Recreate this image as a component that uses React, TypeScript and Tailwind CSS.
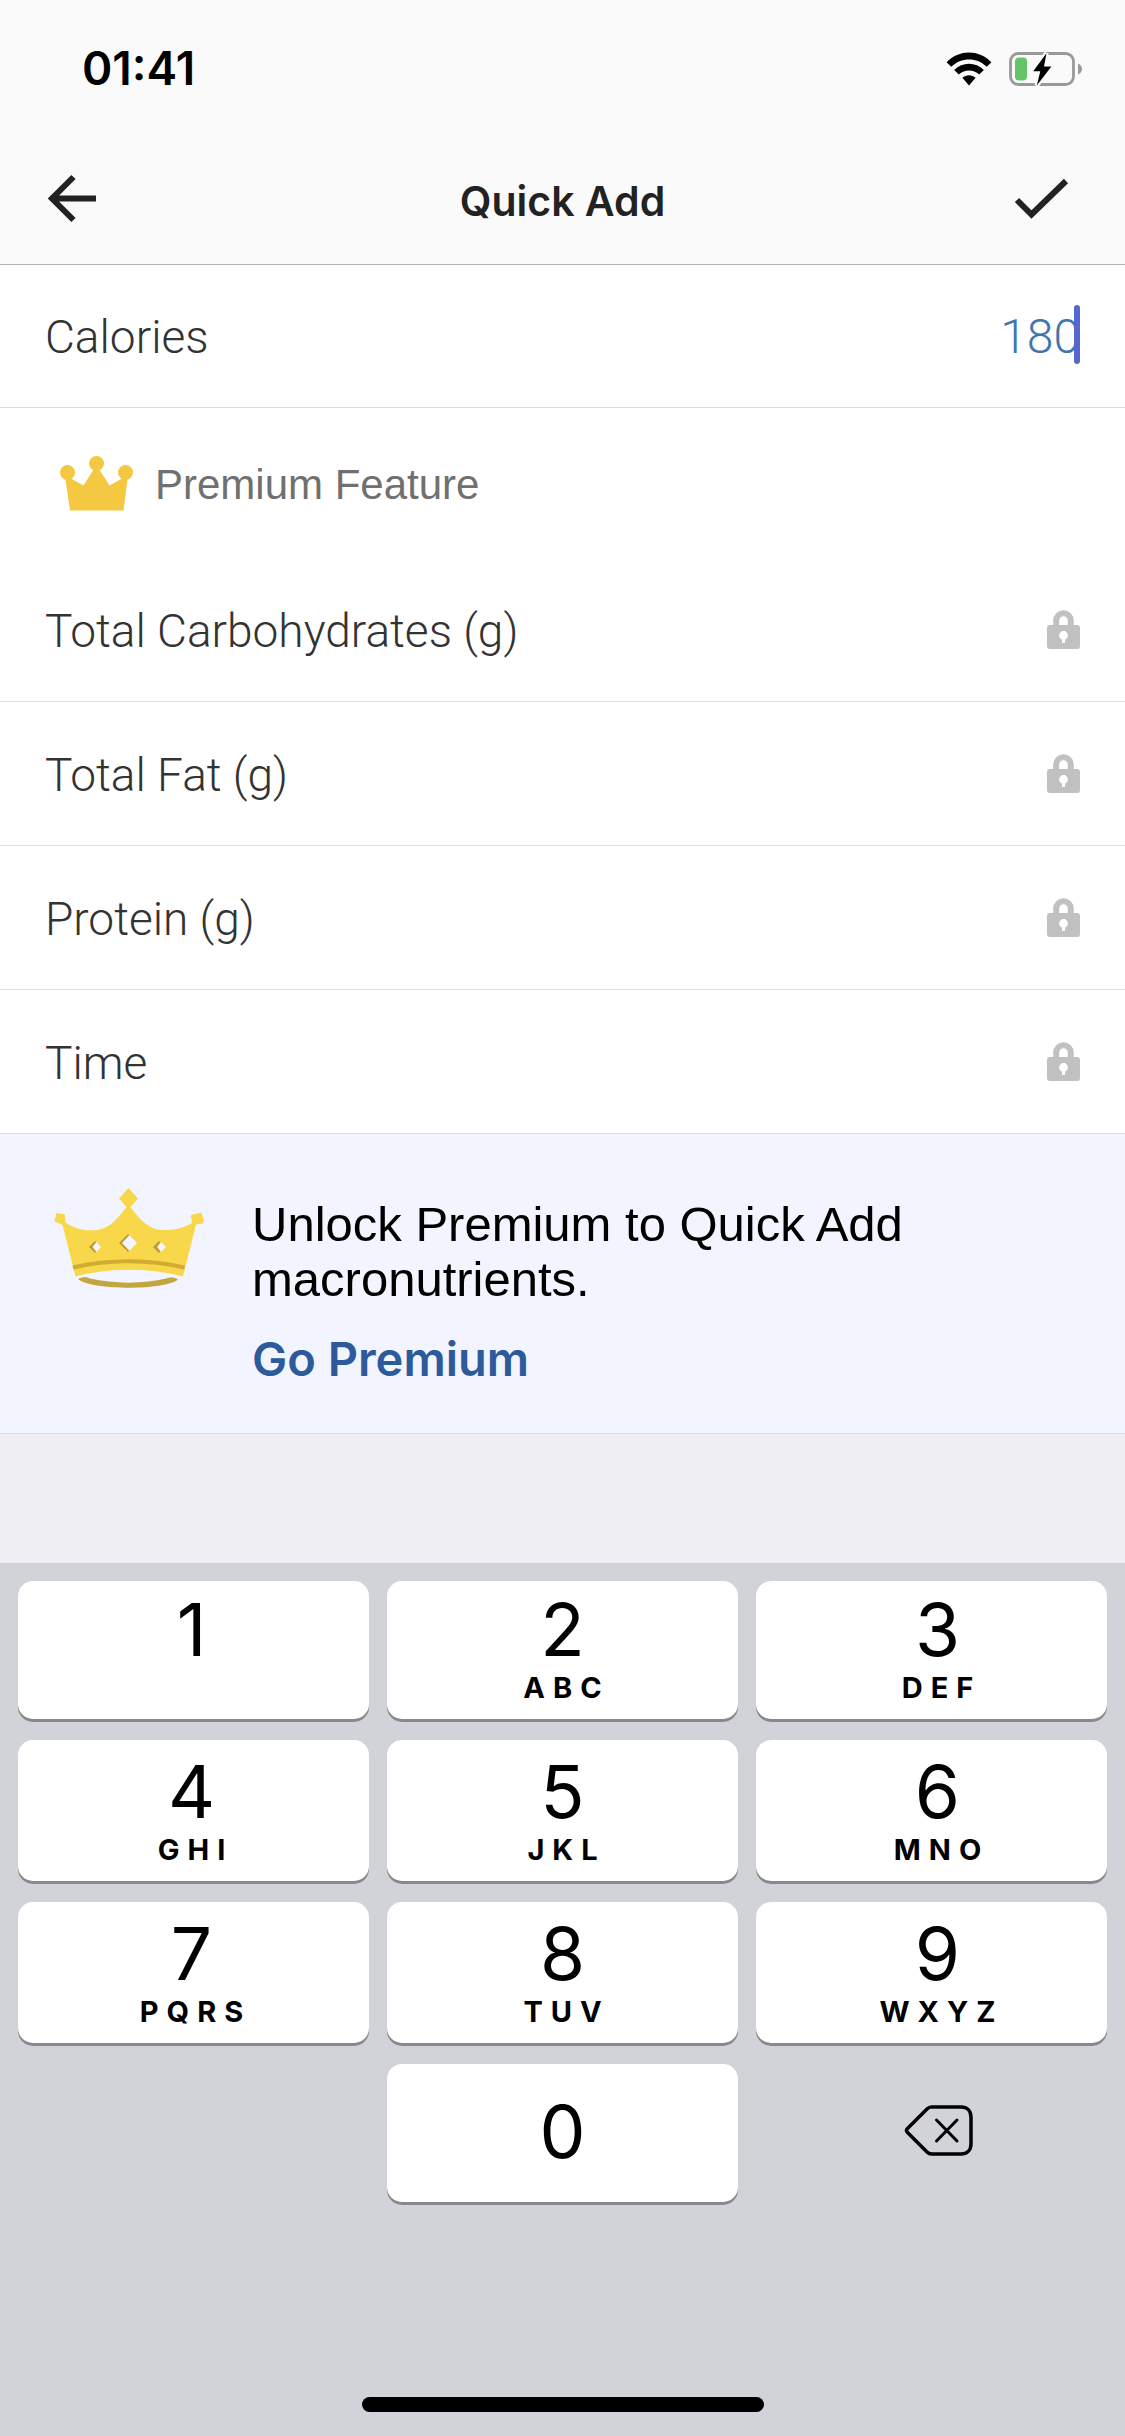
import { useState } from 'react';
import { clsx } from 'clsx';

const KEYS = [
  { digit: '1', letters: '' },
  { digit: '2', letters: 'ABC' },
  { digit: '3', letters: 'DEF' },
  { digit: '4', letters: 'GHI' },
  { digit: '5', letters: 'JKL' },
  { digit: '6', letters: 'MNO' },
  { digit: '7', letters: 'PQRS' },
  { digit: '8', letters: 'TUV' },
  { digit: '9', letters: 'WXYZ' },
];

const LOCKED_FIELDS = ['Total Carbohydrates (g)', 'Total Fat (g)', 'Protein (g)', 'Time'];

function WifiIcon() {
  return (
    <svg viewBox="0 0 46 34" className="h-[34px] w-[46px]" aria-hidden="true">
      <path d="M0.6 10.2C12.8-2.9 33.2-2.9 45.4 10.2L40.8 14.8C31 5 15 5 5.2 14.8Z" />
      <path d="M8.2 18C16.4 9.6 29.6 9.6 37.8 18L33.2 22.6C27.4 17 18.6 17 12.8 22.6Z" />
      <path d="M16.4 25.8C20.2 22.4 25.8 22.4 29.6 25.8L23 33.5Z" />
    </svg>
  );
}

function BatteryIcon() {
  return (
    <svg viewBox="0 0 74 36" className="h-9 w-[74px]" aria-hidden="true">
      <rect x="1.5" y="2.5" width="63" height="31" rx="8" fill="none" stroke="#999" strokeWidth="2.8" />
      <path d="M69 12.5C71.5 13.5 73 15.6 73 18S71.5 22.5 69 23.5Z" fill="#999" />
      <rect x="6" y="6.5" width="12" height="23" rx="4" fill="#65c466" />
      <path d="M37.5 2.2L24.2 20.2H31.3L27.8 34.5L42.4 15.4H35Z" stroke="#fafafa" strokeWidth="4.5" />
      <path d="M37.5 2.2L24.2 20.2H31.3L27.8 34.5L42.4 15.4H35Z" />
    </svg>
  );
}

function LockIcon() {
  return (
    <svg viewBox="0 0 33 40" className="h-10 w-[33px] shrink-0" aria-hidden="true">
      <path d="M9.2 18V10.5a7.3 7.3 0 0 1 14.6 0V18" fill="none" stroke="#c1c1c1" strokeWidth="6" />
      <rect y="15" width="33" height="24" rx="3" fill="#c1c1c1" />
      <circle cx="16.5" cy="25.5" r="4.4" fill="#fff" />
      <path d="M15 27.5h3v5.5h-3z" fill="#fff" />
    </svg>
  );
}

function SmallCrown() {
  return (
    <svg viewBox="0 0 73 55" className="h-[55px] w-[73px] shrink-0" fill="#f5c842" aria-hidden="true">
      <circle cx="7.5" cy="16.5" r="7.5" />
      <circle cx="36.5" cy="7.5" r="7.5" />
      <circle cx="65.5" cy="16.5" r="7.5" />
      <path d="M5.5 23.5L10 22L23.5 29.5L34 13H39L49.5 29.5L63 22L67.5 23.5L63.5 54.5H10Z" />
    </svg>
  );
}

function BigCrown() {
  return (
    <svg viewBox="0 0 150 100" className="h-[100px] w-[150px] shrink-0" aria-hidden="true">
      <path
        d="M74.5 0L84 10.5L76.5 19C84 29 94 42 109 42C121 42.5 131 39.5 138 35L137 27L147.5 24.5L150 33L149 35.5L142 36.5L129 88.5C96 79.5 54 79.5 21.5 88.5L8.5 37L0.5 33.5L2.5 25L11 26.5L11.5 34.5C20 40 30 43.5 42 42C57 41 66 27 72.5 19L65 10.5Z"
        fill="#f8d74a"
      />
      <path d="M18.5 77.5C54 69 95 69 131 77.5L130 81.5C95 73 54 73 19.5 81.5Z" fill="#d1ab32" />
      <path d="M24 91C29 88.5 33 89 36 90.5C60 96 90 96 112 90.5C116 89 120 89 124 91.5C112 102.5 36 102.5 24 91Z" fill="#c3a63f" />
      <path d="M74 46L82 55L74 64L65 55Z" fill="#bd9b30" />
      <path d="M75.5 47L83 55L75.5 63L68 55Z" fill="#f4f6ff" />
      <path d="M41 53L46 59L41 65L35 59Z" fill="#bd9b30" />
      <path d="M42.5 54L47 59L42.5 64L38.5 59Z" fill="#f4f6ff" />
      <path d="M105 53L111 59L105 65L99 59Z" fill="#bd9b30" />
      <path d="M107 54L112 59L107 64L103 59Z" fill="#f4f6ff" />
    </svg>
  );
}

export default function App() {
  const [calories, setCalories] = useState('180');

  return (
    <div className="flex min-h-screen flex-col bg-[#efeef3] font-['Inter',sans-serif] text-black">
      <div className="flex h-[137px] items-center justify-between bg-[#fafafa] pr-[42px] pl-[82px]">
        <span className="text-[46px] font-semibold">01:41</span>
        <div className="flex items-center gap-[17px]">
          <WifiIcon />
          <BatteryIcon />
        </div>
      </div>

      <header className="flex h-32 items-center justify-between border-b border-[#b2b2b2] bg-[#fafafa] px-[44px] text-[#222]">
        <button type="button" aria-label="Back">
          <svg viewBox="0 0 68 56" className="h-14 w-[68px]" fill="none" stroke="currentColor" strokeWidth="6" aria-hidden="true">
            <path d="M52 25.5H9M29.5 4L8 25.5L29.5 47" />
          </svg>
        </button>
        <h1 className="pt-0.5 text-[41px] font-semibold">Quick Add</h1>
        <button type="button" aria-label="Save">
          <svg viewBox="0 0 68 56" className="h-14 w-[68px]" fill="none" stroke="currentColor" strokeWidth="6" aria-hidden="true">
            <path d="M4 27L18.5 41.5L53 8" />
          </svg>
        </button>
      </header>

      <main>
        <div className="flex h-[143px] items-center justify-between border-b border-[#dedfe1] bg-white px-[45px] font-['Roboto',sans-serif] text-[46px] font-light">
          <label htmlFor="calories" className="pt-0.5 text-[#333]">Calories</label>
          <div className="relative">
            <input
              id="calories"
              inputMode="numeric"
              value={calories}
              onChange={(e) => setCalories(e.target.value)}
              className="w-[300px] pt-0.5 text-right text-[48px] text-[#3f76b0] caret-transparent outline-none"
            />
            <span className="absolute top-1.5 right-0 h-[59px] w-1.5 rounded-full bg-[#5468cf]" />
          </div>
        </div>

        <div className="flex h-[150px] items-center gap-[22px] bg-white pl-[60px]">
          <SmallCrown />
          <h2 className="pt-0.5 font-['Liberation_Sans',sans-serif] text-[42px] text-[#707070]">Premium Feature</h2>
        </div>

        <ul>
          {LOCKED_FIELDS.map((name) => (
            <li
              key={name}
              className="flex h-36 items-center justify-between border-b border-[#dedfe1] bg-white px-[45px] font-['Roboto',sans-serif] text-[46px] font-light text-[#333]"
            >
              <span className="pt-1">{name}</span>
              <LockIcon />
            </li>
          ))}
        </ul>

        <section className="flex gap-12 border-b border-[#d9dae6] bg-[#f2f5ff] px-[54px] pt-[54px] pb-[46px]">
          <BigCrown />
          <div className="pt-[9px]">
            <p className="font-['Liberation_Sans',sans-serif] text-[49px] leading-[55px]">
              Unlock Premium to Quick Add macronutrients.
            </p>
            <a href="#premium" className="mt-6 block text-[47px] leading-[56px] font-semibold text-[#2d5a9b]">Go Premium</a>
          </div>
        </section>
      </main>

      {/* Number pad */}
      <div className="mt-auto flex flex-col items-center bg-[#d2d3d8] px-[18px] pt-[18px] pb-6">
        <div className="grid w-full grid-cols-3 grid-rows-[138px_141px_141px_138px] gap-x-[18px] gap-y-[21px]">
          {KEYS.map(({ digit, letters }, i) => (
            <button
              key={digit}
              type="button"
              onClick={() => setCalories(calories + digit)}
              className={clsx(
                'flex flex-col items-center justify-end gap-1.5 rounded-[15px] bg-white pb-[15px] shadow-[0_3px_0_#88898c]',
                i % 3 === 0 && 'pr-1',
                i % 3 === 2 && 'pl-3',
              )}
            >
              <span className="text-[73px] leading-[73px]">{digit}</span>
              <span className="h-8 pl-2 text-[29px] leading-8 font-bold tracking-[8px]">{letters}</span>
            </button>
          ))}
          <button
            type="button"
            onClick={() => setCalories(calories + '0')}
            className="col-start-2 rounded-[15px] bg-white pb-1 text-[73px] leading-[73px] shadow-[0_3px_0_#88898c]"
          >
            0
          </button>
          <button
            type="button"
            aria-label="Delete"
            onClick={() => setCalories(calories.slice(0, -1))}
            className="flex items-center justify-center pb-1 pl-3"
          >
            <svg
              viewBox="0 0 70 52"
              className="h-[52px] w-[70px]"
              fill="none"
              stroke="currentColor"
              strokeWidth="3.5"
              strokeLinecap="round"
              strokeLinejoin="round"
              aria-hidden="true"
            >
              <path d="M28.5 2H58C64 2 68 6 68 12V39C68 45 64 49 58 49H28.5Q26 49 24 47L4.5 27.5Q2.5 25.5 4.5 23.5L24 4Q26 2 28.5 2Z" />
              <path d="M33.5 15L54 36M54 15L33.5 36" strokeWidth="3" />
            </svg>
          </button>
        </div>
        <div className="mt-[195px] h-[15px] w-[402px] rounded-full bg-black" />
      </div>
    </div>
  );
}
